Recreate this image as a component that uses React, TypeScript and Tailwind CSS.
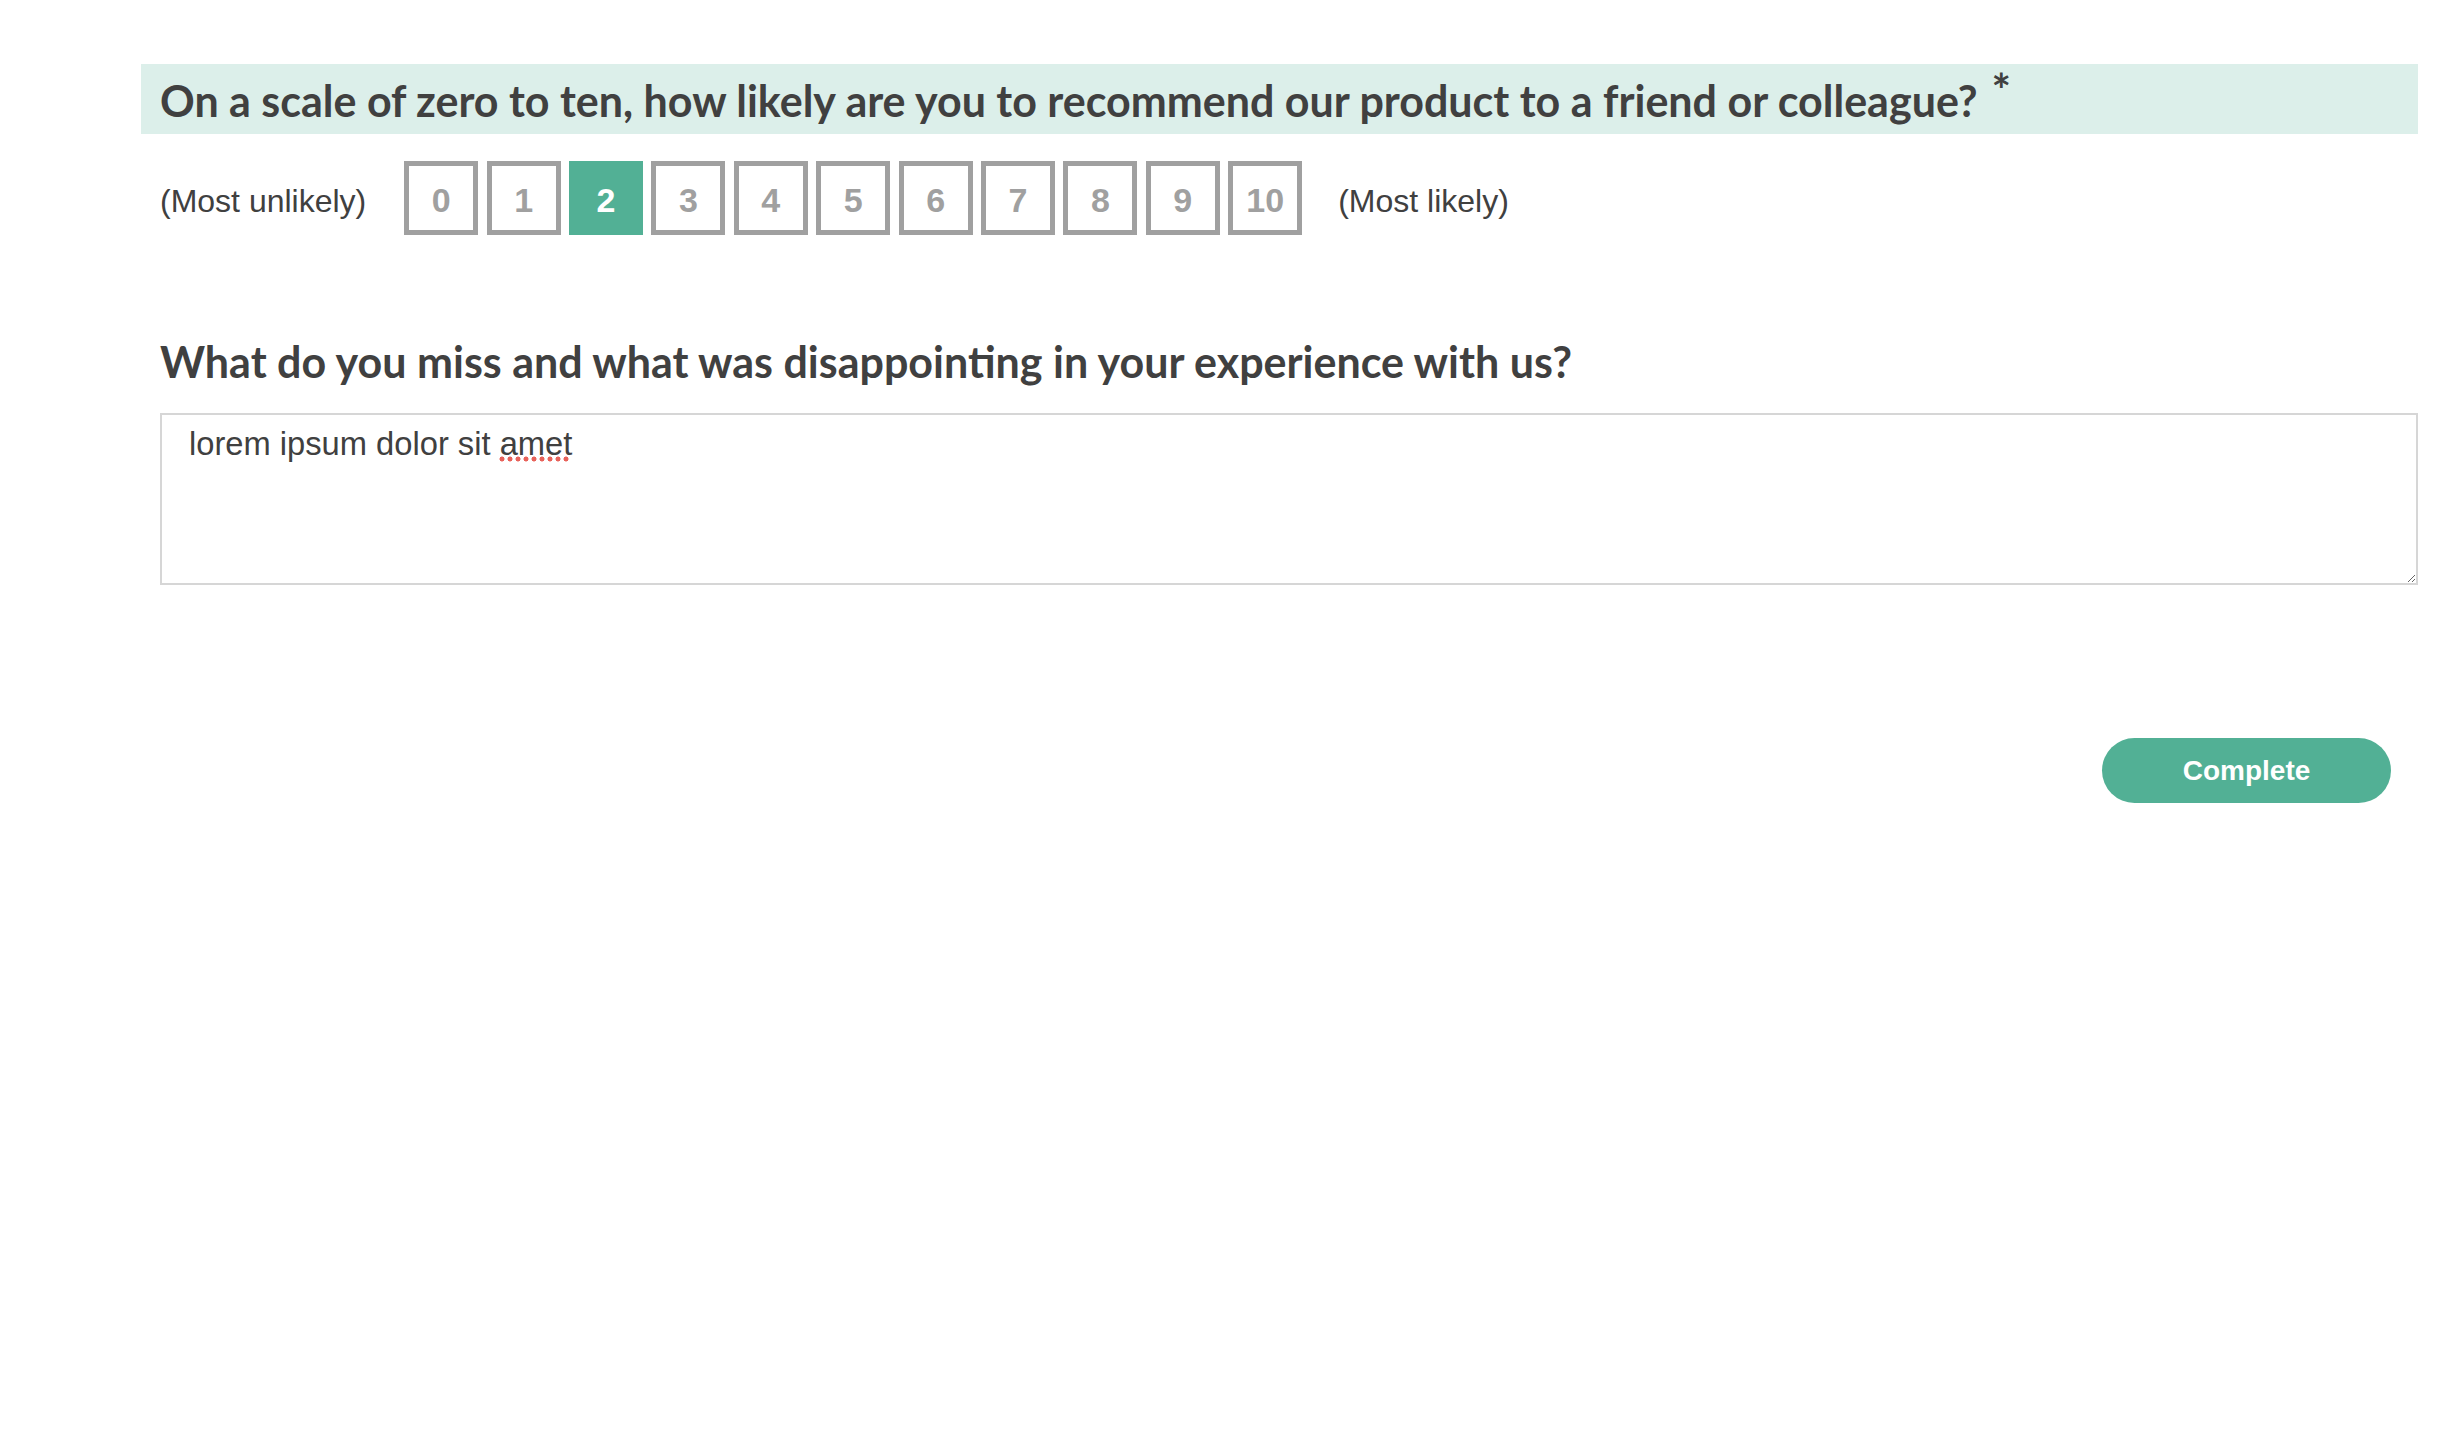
import { useState } from "react";

const SCALE = [0, 1, 2, 3, 4, 5, 6, 7, 8, 9, 10];

const heading = "font-['Lato','Noto_Sans',sans-serif] font-bold text-[#404040]";
const helv = "font-['Liberation_Sans','Arial',sans-serif]";
const label = "pt-[6px] text-[32px] text-[#404040]";

export default function App() {
	const [score, setScore] = useState(2);
	const [answer, setAnswer] = useState("lorem ipsum dolor sit amet");

	return (
		<div className="min-h-screen bg-white pl-[141px] pr-[20px] pt-[64px]">
			{/* question 1 */}
			<div className="flex h-[70px] items-center bg-[#dcefea] pl-[19px]">
				<h2 className={`${heading} pt-[2px] text-[43px] leading-none`}>
					On a scale of zero to ten, how likely are you to recommend our product
					to a friend or colleague?
					<span className="ml-[14px] align-[10px] text-[46px] leading-[0]">*</span>
				</h2>
			</div>

			<div className={`${helv} mt-[27px] flex items-center gap-[38px] pl-[19px]`}>
				<span className={label}>(Most unlikely)</span>
				<div className="mr-[-2px] flex gap-[8.4px]">
					{SCALE.map((n) => (
						<button
							key={n}
							type="button"
							onClick={() => setScore(n)}
							className={
								n === score
									? "flex h-[74px] w-[74px] items-center justify-center border-[5px] border-[#52b095] bg-[#52b095] pt-[4px] text-[34px] font-bold text-white"
									: "flex h-[74px] w-[74px] items-center justify-center border-[5px] border-[#a0a0a0] bg-white pt-[4px] text-[34px] font-bold text-[#a0a0a0]"
							}
						>
							{n}
						</button>
					))}
				</div>
				<span className={label}>(Most likely)</span>
			</div>

			{/* question 2 */}
			<h2 className={`${heading} mt-[101px] pl-[19px] text-[43px] leading-[52px]`}>
				What do you miss and what was disappointing in your experience with us?
			</h2>

			<div className="relative ml-[19px] mt-[25px]">
				<textarea
					value={answer}
					onChange={(e) => setAnswer(e.target.value)}
					className={`${helv} block h-[172px] w-full border-[2px] border-[#d6d6d6] bg-white pl-[27px] pt-[4px] text-[32.7px] leading-normal text-[#404040] outline-none`}
				/>
				{/* spell-check squiggle under "amet" */}
				<div className="pointer-events-none absolute left-[338px] top-[43px] h-[6px] w-[72px] bg-[radial-gradient(circle,#e8625a_2.2px,transparent_2.8px)] bg-[length:8px_6px]" />
			</div>

			<div className="mt-[153px] flex justify-end pr-[27px]">
				<button
					type="button"
					className={`${helv} h-[65px] w-[289px] rounded-full bg-[#52b095] text-[28px] font-bold text-white`}
				>
					Complete
				</button>
			</div>
		</div>
	);
}
